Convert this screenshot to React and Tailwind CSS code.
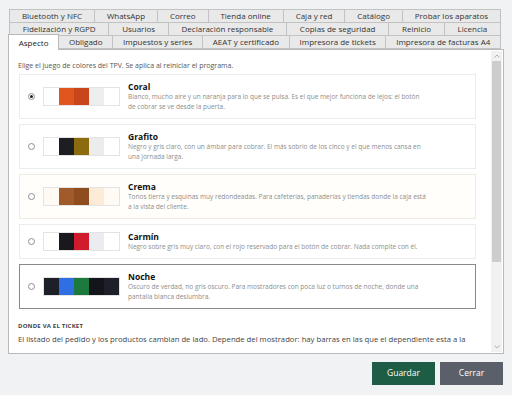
import React from "react";

const tabRows = [
  ["Bluetooth y NFC", "WhatsApp", "Correo", "Tienda online", "Caja y red", "Catálogo", "Probar los aparatos"],
  ["Fidelización y RGPD", "Usuarios", "Declaración responsable", "Copias de seguridad", "Reinicio", "Licencia"],
  ["Aspecto", "Obligado", "Impuestos y series", "AEAT y certificado", "Impresora de tickets", "Impresora de facturas A4"],
];

const themes = [
  {
    name: "Coral",
    desc: [
      "Blanco, mucho aire y un naranja para lo que se pulsa. Es el que mejor funciona de lejos: el botón",
      "de cobrar se ve desde la puerta.",
    ],
    colors: ["bg-white", "bg-[#e0561f]", "bg-[#c8461a]", "bg-[#eeeeee]", "bg-white"],
    card: "border-[#ececec] bg-white",
    checked: true,
  },
  {
    name: "Grafito",
    desc: [
      "Negro y gris claro, con un ámbar para cobrar. El más sobrio de los cinco y el que menos cansa en",
      "una jornada larga.",
    ],
    colors: ["bg-white", "bg-[#1d1e23]", "bg-[#8c6a0e]", "bg-[#ececec]", "bg-white"],
    card: "border-[#ececec] bg-white",
  },
  {
    name: "Crema",
    desc: [
      "Tonos tierra y esquinas muy redondeadas. Para cafeterías, panaderías y tiendas donde la caja está",
      "a la vista del cliente.",
    ],
    colors: ["bg-[#fffaf4]", "bg-[#a15a2a]", "bg-[#8e4c1f]", "bg-[#fcebd6]", "bg-[#fffaf4]"],
    card: "border-[#f0ebe2] bg-[#fffefb]",
  },
  {
    name: "Carmín",
    desc: ["Negro sobre gris muy claro, con el rojo reservado para el botón de cobrar. Nada compite con él."],
    colors: ["bg-white", "bg-[#19191d]", "bg-[#d01b2d]", "bg-[#ebecf1]", "bg-white"],
    card: "border-[#ececec] bg-white",
  },
  {
    name: "Noche",
    desc: [
      "Oscuro de verdad, no gris oscuro. Para mostradores con poca luz o turnos de noche, donde una",
      "pantalla blanca deslumbra.",
    ],
    colors: ["bg-[#1e2029]", "bg-[#2f6ee3]", "bg-[#1d7a3f]", "bg-[#14151a]", "bg-[#1e2029]"],
    card: "border-[#8a8a8a] bg-white",
  },
];

function Tab({ label, active }) {
  if (active) {
    return (
      <div className="relative z-10 -mt-[2px] -mb-px flex h-[16px] flex-auto items-center justify-center border border-b-0 border-[#b9b9b9] bg-white px-[6px] text-[#222]">
        {label}
      </div>
    );
  }
  return (
    <div className="-ml-px flex h-[14px] flex-auto items-center justify-center border border-[#c2c2c2] bg-[#e9e9e9] px-[6px] text-[#333] first:ml-0">
      {label}
    </div>
  );
}

function ThemeCard({ theme }) {
  return (
    <div className={`flex items-center border py-[6px] pl-[8px] ${theme.card}`}>
      <span className="flex h-[7px] w-[7px] shrink-0 items-center justify-center rounded-full border border-[#8f8f8f] bg-white">
        {theme.checked && <span className="h-[3px] w-[3px] rounded-full bg-[#222]" />}
      </span>
      <div className="ml-[8px] flex h-[19px] shrink-0 border border-[#e3e3e3]">
        {theme.colors.map((c, i) => (
          <span key={i} className={`h-full w-[15px] ${c}`} />
        ))}
      </div>
      <div className="ml-[8px]">
        <div className="text-[8.5px] font-bold leading-[11px] text-[#111]">{theme.name}</div>
        {theme.desc.map((line) => (
          <div key={line} className="whitespace-nowrap text-[6.5px] leading-[10px] text-[#8d8d8d]">
            {line}
          </div>
        ))}
      </div>
    </div>
  );
}

function Scrollbar() {
  return (
    <div className="mr-px mt-px mb-px flex w-[11px] shrink-0 flex-col bg-[#f1f1f1]">
      <div className="flex h-[10px] items-center justify-center">
        <svg width="6" height="4" viewBox="0 0 6 4">
          <path d="M0.5 3.5 L3 1 L5.5 3.5" fill="none" stroke="#a8a8a8" strokeWidth="0.9" />
        </svg>
      </div>
      <div className="mx-px h-[201px] bg-[#cdcdcd]" />
      <div className="flex-1" />
      <div className="flex h-[10px] items-center justify-center">
        <svg width="6" height="4" viewBox="0 0 6 4">
          <path d="M0.5 0.5 L3 3 L5.5 0.5" fill="none" stroke="#a8a8a8" strokeWidth="0.9" />
        </svg>
      </div>
    </div>
  );
}

export default function App() {
  return (
    <div className="h-[416px] w-[520px] bg-white font-['Open_Sans',sans-serif]">
      <div className="flex h-[395px] w-[512px] flex-col bg-[#f1f2f4] px-[8px] pt-[9px]">
        {/* tab strip, three rows */}
        <div className="mr-[3px] text-[8px]">
          <div className="ml-px flex">
            {tabRows[0].map((t) => (
              <Tab key={t} label={t} />
            ))}
          </div>
          <div className="ml-px -mt-px flex">
            {tabRows[1].map((t) => (
              <Tab key={t} label={t} />
            ))}
          </div>
          <div className="-mt-px flex items-end">
            {tabRows[2].map((t, i) => (
              <Tab key={t} label={t} active={i === 0} />
            ))}
          </div>
        </div>

        {/* page body */}
        <div className="flex h-[305px] border border-[#b9b9b9] bg-white">
          <div className="h-[294px] flex-1 overflow-hidden pl-[9px] pr-[15px] pt-[10px]">
            <p className="mb-[3px] text-[7px] leading-[11px] text-[#555]">
              Elige el juego de colores del TPV. Se aplica al reiniciar el programa.
            </p>
            <div className="ml-px flex flex-col gap-[5px]">
              {themes.map((t) => (
                <ThemeCard key={t.name} theme={t} />
              ))}
            </div>
            <div className="mt-[12px] text-[6px] font-bold leading-[10px] tracking-[0.2px] text-[#444]">
              DONDE VA EL TICKET
            </div>
            <p className="mt-[2px] whitespace-nowrap text-[7.7px] leading-[12px] text-[#444]">
              El listado del pedido y los productos cambian de lado. Depende del mostrador: hay barras en las que el dependiente esta a la
            </p>
          </div>
          <Scrollbar />
        </div>

        <div className="mt-[8px] flex justify-end gap-[5px] pr-px">
          <button className="h-[23px] w-[63px] bg-[#1e5d45] text-[8.5px] text-white">Guardar</button>
          <button className="h-[23px] w-[63px] bg-[#5b5f69] text-[8.5px] text-white">Cerrar</button>
        </div>
      </div>
    </div>
  );
}
